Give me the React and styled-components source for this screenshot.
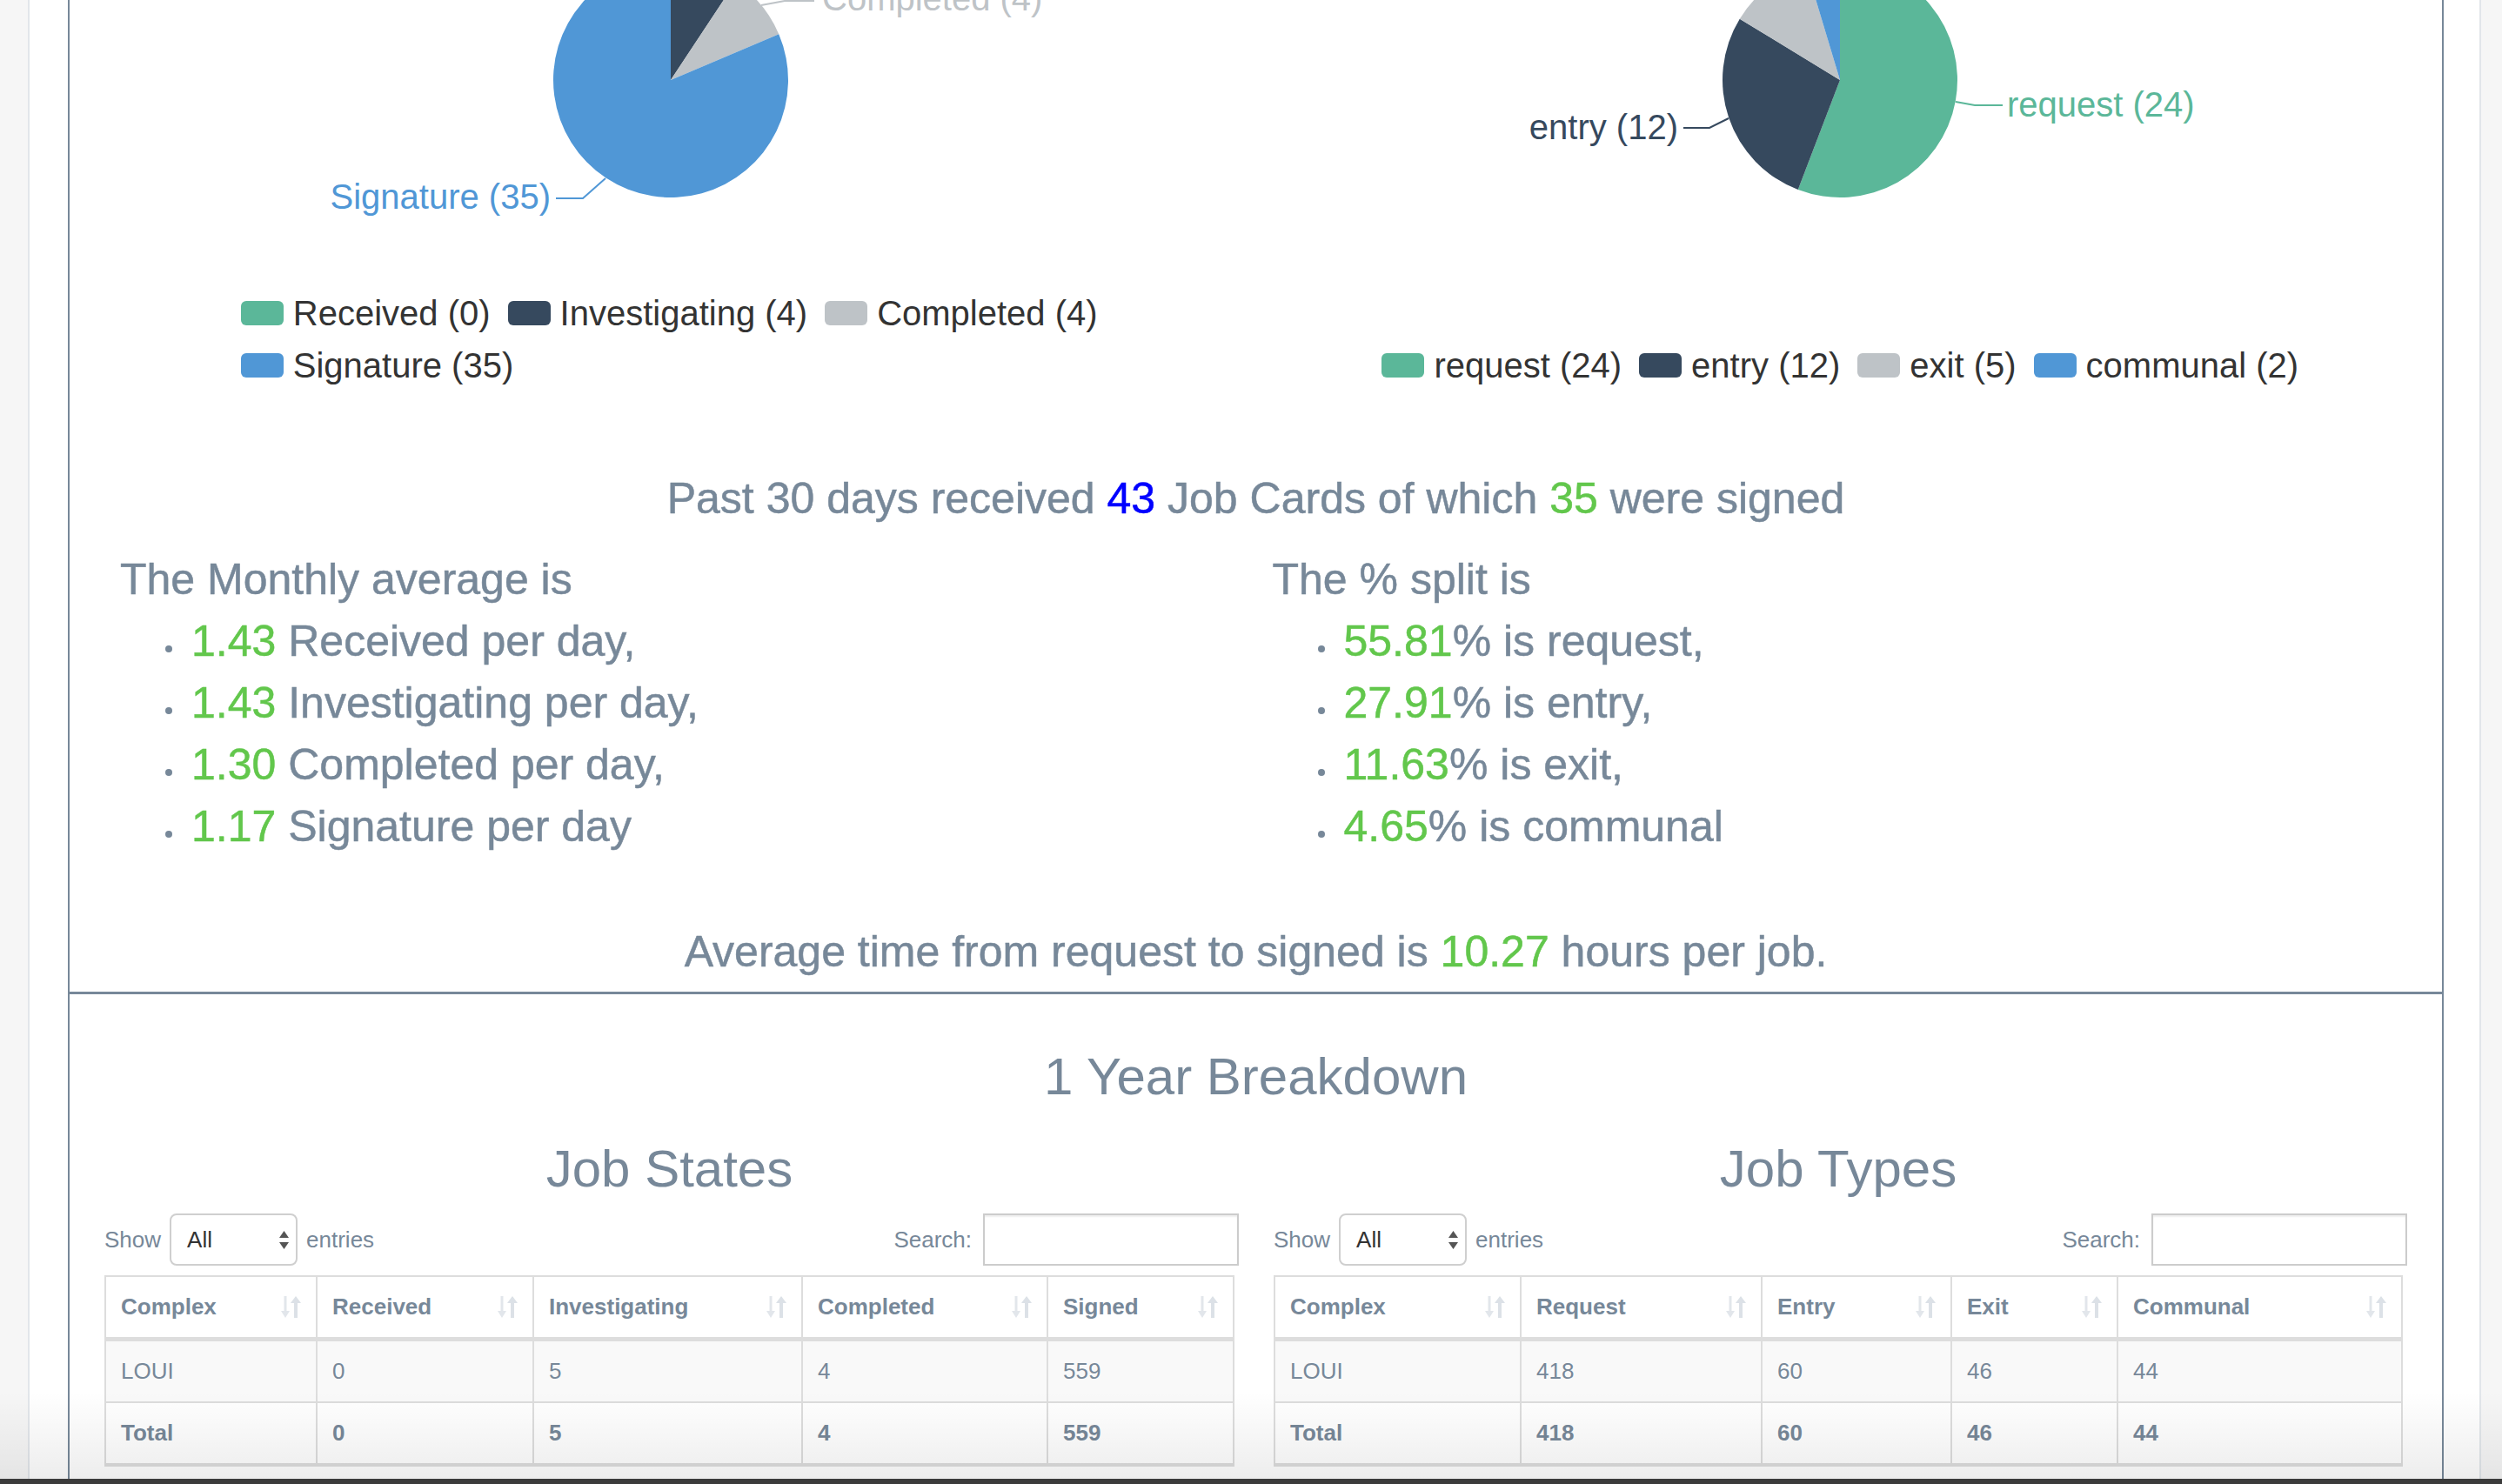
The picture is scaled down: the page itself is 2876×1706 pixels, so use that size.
import React from 'react';
import styled, { createGlobalStyle } from 'styled-components';

const SLATE = '#778899';
const GREEN = '#62c74c';
const PIE = {
  green: '#5bb799',
  dark: '#36495e',
  gray: '#bec3c7',
  blue: '#5097d6',
};

const GlobalStyle = createGlobalStyle`
  html, body {
    margin: 0;
    padding: 0;
    height: 100%;
  }
  body {
    font-family: "Liberation Sans", Arial, Helvetica, sans-serif;
    background: #f6f6f6;
    color: ${SLATE};
  }
  #root {
    height: 100%;
  }
`;

const Screen = styled.div`
  position: relative;
  height: 100vh;
  display: flex;
  flex-direction: column;
  overflow: hidden;
`;

const Main = styled.div`
  flex: 1;
  min-height: 0;
  display: flex;
  margin: 0 24px 0 32px;
  padding: 0 44px;
  background: #fff;
  border-left: 2px solid #e2e6ea;
  border-right: 2px solid #e2e6ea;
`;

const Panel = styled.div`
  flex: 1;
  display: flex;
  flex-direction: column;
  border-left: 2px solid ${SLATE};
  border-right: 2px solid ${SLATE};
`;

const Section = styled.section`
  padding: 0 20px;
  ${p => p.$divided && `
    flex: 1;
    border-top: 3px solid ${SLATE};
  `}
`;

const TwoCols = styled.div`
  display: grid;
  grid-template-columns: 1fr 1fr;
`;

/* charts */
const ChartBox = styled.div`
  height: 450px;
  display: flex;
  flex-direction: column;
`;

const PieSvg = styled.svg`
  display: block;
  overflow: hidden;
`;

const Legend = styled.div`
  margin: auto auto 0;
  width: fit-content;
  max-width: ${p => (p.$max ? `${p.$max}px` : 'none')};
  display: flex;
  flex-wrap: wrap;
  column-gap: 20px;
`;

const LegendItem = styled.div`
  display: flex;
  align-items: center;
  height: 60px;
  font-size: 40px;
  color: #333;
`;

const Swatch = styled.span`
  width: 49px;
  height: 28px;
  border-radius: 6px;
  margin-right: 11px;
  background: ${p => p.$color};
`;

/* stats */
const Summary = styled.p`
  margin: ${p => p.$top}px 0 0;
  text-align: center;
  font-size: 50px;
  line-height: 71px;
  -webkit-text-stroke: 0.5px currentColor;
`;

const Num = styled.span`
  color: ${p => (p.$blue ? '#0000ff' : GREEN)};
`;

const StatsRow = styled(TwoCols)`
  margin-top: 22px;
`;

const StatCol = styled.div`
  padding-left: ${p => p.$indent}px;
  font-size: 50px;
  line-height: 71px;
  -webkit-text-stroke: 0.5px currentColor;
`;

const StatList = styled.ul`
  list-style: none;
  margin: 0;
  padding: 0 0 0 82px;
`;

const StatItem = styled.li`
  &::before {
    content: '';
    display: inline-block;
    width: 8px;
    height: 8px;
    border-radius: 50%;
    background: ${SLATE};
    margin-left: -30px;
    margin-right: 22px;
    vertical-align: 4px;
  }
`;

const Closing = styled(Summary)`
  padding-bottom: 10px;
`;

/* year breakdown */
const BigTitle = styled.h2`
  margin: 62px 0 0;
  text-align: center;
  font-size: 60px;
  line-height: 65px;
  font-weight: normal;
`;

const TableCol = styled.div`
  padding: 0 25px 0 20px;
`;

const TableTitle = styled.h3`
  margin: 41px 0 0;
  text-align: center;
  font-size: 60px;
  line-height: 65px;
  font-weight: normal;
`;

const Controls = styled.div`
  display: flex;
  justify-content: space-between;
  align-items: center;
  height: 60px;
  margin-top: 19px;
  font-size: 26px;
`;

const Field = styled.label`
  display: flex;
  align-items: center;
  gap: ${p => p.$gap || 10}px;
`;

const SelectBox = styled.span`
  box-sizing: border-box;
  width: 147px;
  height: 60px;
  padding: 0 8px 0 18px;
  display: flex;
  align-items: center;
  justify-content: space-between;
  border: 2px solid #cfcfcf;
  border-radius: 8px;
  color: #333;
  background: #fff;
`;

const SearchInput = styled.input`
  box-sizing: border-box;
  width: 294px;
  height: 60px;
  margin-right: -5px;
  border: 2px solid #cccccc;
  box-shadow: inset 0 2px 2px rgba(0, 0, 0, 0.07);
  outline: none;
  font: inherit;
`;

const Table = styled.table`
  width: 100%;
  margin-top: 11px;
  table-layout: fixed;
  border-collapse: collapse;
  border: 2px solid #ddd;
  font-size: 26px;
  line-height: 37px;
`;

const Col = styled.col`
  width: ${p => p.$w}px;
`;

const Th = styled.th`
  padding: 16px 16px 16px 17px;
  text-align: left;
  font-weight: bold;
  border: 2px solid #ddd;
  border-bottom-width: 5px;
  background: #fff;
`;

const HeadInner = styled.div`
  display: flex;
  align-items: center;
  justify-content: space-between;
`;

const Td = styled.td`
  padding: 16px 16px 16px 17px;
  border: 2px solid #ddd;
  background: ${p => (p.$foot ? '#fff' : '#f9f9f9')};
  font-weight: ${p => (p.$foot ? 'bold' : 'normal')};
  ${p => p.$foot && 'border-bottom-width: 4px;'}
`;

const Shade = styled.div`
  position: absolute;
  left: 0;
  right: 0;
  bottom: 6px;
  height: 100px;
  background: linear-gradient(rgba(0, 0, 0, 0), rgba(0, 0, 0, 0.07));
  pointer-events: none;
`;

const Bar = styled.div`
  height: 6px;
  background: #3b3b3b;
`;

/* helpers */
const rad = d => (d * Math.PI) / 180;

const slicePath = (cx, cy, r, a0, a1) => {
  const x0 = cx + r * Math.sin(rad(a0));
  const y0 = cy - r * Math.cos(rad(a0));
  const x1 = cx + r * Math.sin(rad(a1));
  const y1 = cy - r * Math.cos(rad(a1));
  const large = a1 - a0 > 180 ? 1 : 0;
  return `M${cx},${cy} L${x0},${y0} A${r},${r} 0 ${large} 1 ${x1},${y1} Z`;
};

const Pie = ({ data, labels }) => {
  const total = data.reduce((s, d) => s + d.value, 0);
  let angle = 0;
  const slices = data
    .filter(d => d.value > 0)
    .map(d => {
      const a0 = angle;
      angle += (d.value / total) * 360;
      return { ...d, a0, a1: angle };
    });
  return (
    <PieSvg width="1342" height="330" viewBox="0 0 1342 330">
      {slices.map(s => (
        <path key={s.name} d={slicePath(671, 92, 135, s.a0, s.a1)} fill={s.color} />
      ))}
      {labels.map(l => (
        <g key={l.text}>
          <polyline points={l.points} fill="none" stroke={l.color} strokeWidth="2" />
          <text
            x={l.x}
            y={l.y}
            textAnchor={l.anchor}
            fill={l.color}
            fontSize="40"
            fontFamily='"Liberation Sans", Arial, sans-serif'
          >
            {l.text}
          </text>
        </g>
      ))}
    </PieSvg>
  );
};

const SortIcon = () => (
  <svg width="25" height="27" viewBox="0 0 25 27">
    <line x1="6" y1="1" x2="6" y2="20" stroke="#e2e6eb" strokeWidth="3" />
    <polygon points="1,18 11,18 6,26" fill="#e2e6eb" />
    <line x1="18" y1="8" x2="18" y2="26" stroke="#dce1e7" strokeWidth="4" />
    <polygon points="12,9 24,9 18,1" fill="#dce1e7" />
  </svg>
);

const SelectArrows = () => (
  <svg width="11" height="21" viewBox="0 0 11 21">
    <polygon points="0,8 11,8 5.5,0" fill="#555" />
    <polygon points="0,13 11,13 5.5,21" fill="#555" />
  </svg>
);

const stateData = [
  { name: 'Received', value: 0, color: PIE.green },
  { name: 'Investigating', value: 4, color: PIE.dark },
  { name: 'Completed', value: 4, color: PIE.gray },
  { name: 'Signature', value: 35, color: PIE.blue },
];

const typeData = [
  { name: 'request', value: 24, color: PIE.green },
  { name: 'entry', value: 12, color: PIE.dark },
  { name: 'exit', value: 5, color: PIE.gray },
  { name: 'communal', value: 2, color: PIE.blue },
];

const stateLabels = [
  { text: 'Completed (4)', color: PIE.gray, points: '775,6 802,1 836,1', x: 845, y: 12, anchor: 'start' },
  { text: 'Signature (35)', color: PIE.blue, points: '596,205 570,228 539,228', x: 533, y: 240, anchor: 'end' },
];

const typeLabels = [
  { text: 'request (24)', color: PIE.green, points: '804,117 826,121 858,121', x: 863, y: 134, anchor: 'start' },
  { text: 'entry (12)', color: PIE.dark, points: '543,136 521,147 491,147', x: 485, y: 160, anchor: 'end' },
];

const tables = [
  {
    title: 'Job States',
    widths: [243, 249, 309, 282, 214],
    head: ['Complex', 'Received', 'Investigating', 'Completed', 'Signed'],
    row: ['LOUI', '0', '5', '4', '559'],
    total: ['Total', '0', '5', '4', '559'],
  },
  {
    title: 'Job Types',
    widths: [283, 277, 218, 191, 327],
    head: ['Complex', 'Request', 'Entry', 'Exit', 'Communal'],
    row: ['LOUI', '418', '60', '46', '44'],
    total: ['Total', '418', '60', '46', '44'],
  },
];

const ChartCard = ({ data, labels, max }) => (
  <ChartBox>
    <Pie data={data} labels={labels} />
    <Legend $max={max}>
      {data.map(d => (
        <LegendItem key={d.name}>
          <Swatch $color={d.color} />
          {d.name} ({d.value})
        </LegendItem>
      ))}
    </Legend>
  </ChartBox>
);

const DataTable = ({ t }) => (
  <TableCol>
    <TableTitle>{t.title}</TableTitle>
    <Controls>
      <Field>
        Show
        <SelectBox>
          All
          <SelectArrows />
        </SelectBox>
        entries
      </Field>
      <Field $gap={13}>
        Search:
        <SearchInput type="text" />
      </Field>
    </Controls>
    <Table>
      <colgroup>
        {t.widths.map((w, i) => (
          <Col key={i} $w={w} />
        ))}
      </colgroup>
      <thead>
        <tr>
          {t.head.map(h => (
            <Th key={h}>
              <HeadInner>
                {h}
                <SortIcon />
              </HeadInner>
            </Th>
          ))}
        </tr>
      </thead>
      <tbody>
        <tr>
          {t.row.map((c, i) => (
            <Td key={i}>{c}</Td>
          ))}
        </tr>
      </tbody>
      <tfoot>
        <tr>
          {t.total.map((c, i) => (
            <Td key={i} $foot>
              {c}
            </Td>
          ))}
        </tr>
      </tfoot>
    </Table>
  </TableCol>
);

export default function App() {
  return (
    <Screen>
      <GlobalStyle />
      <Main>
        <Panel>
          <Section>
            <TwoCols>
              <ChartCard data={stateData} labels={stateLabels} max={990} />
              <ChartCard data={typeData} labels={typeLabels} />
            </TwoCols>

            <Summary $top={88}>
              Past 30 days received <Num $blue>43</Num> Job Cards of which <Num>35</Num> were signed
            </Summary>

            <StatsRow>
              <StatCol $indent={38}>
                The Monthly average is
                <StatList>
                  <StatItem><Num>1.43</Num> Received per day,</StatItem>
                  <StatItem><Num>1.43</Num> Investigating per day,</StatItem>
                  <StatItem><Num>1.30</Num> Completed per day,</StatItem>
                  <StatItem><Num>1.17</Num> Signature per day</StatItem>
                </StatList>
              </StatCol>
              <StatCol $indent={19}>
                The % split is
                <StatList>
                  <StatItem><Num>55.81</Num>% is request,</StatItem>
                  <StatItem><Num>27.91</Num>% is entry,</StatItem>
                  <StatItem><Num>11.63</Num>% is exit,</StatItem>
                  <StatItem><Num>4.65</Num>% is communal</StatItem>
                </StatList>
              </StatCol>
            </StatsRow>

            <Closing $top={73}>
              Average time from request to signed is <Num>10.27</Num> hours per job.
            </Closing>
          </Section>

          <Section $divided>
            <BigTitle>1 Year Breakdown</BigTitle>
            <TwoCols>
              {tables.map(t => (
                <DataTable key={t.title} t={t} />
              ))}
            </TwoCols>
          </Section>
        </Panel>
      </Main>
      <Shade />
      <Bar />
    </Screen>
  );
}
